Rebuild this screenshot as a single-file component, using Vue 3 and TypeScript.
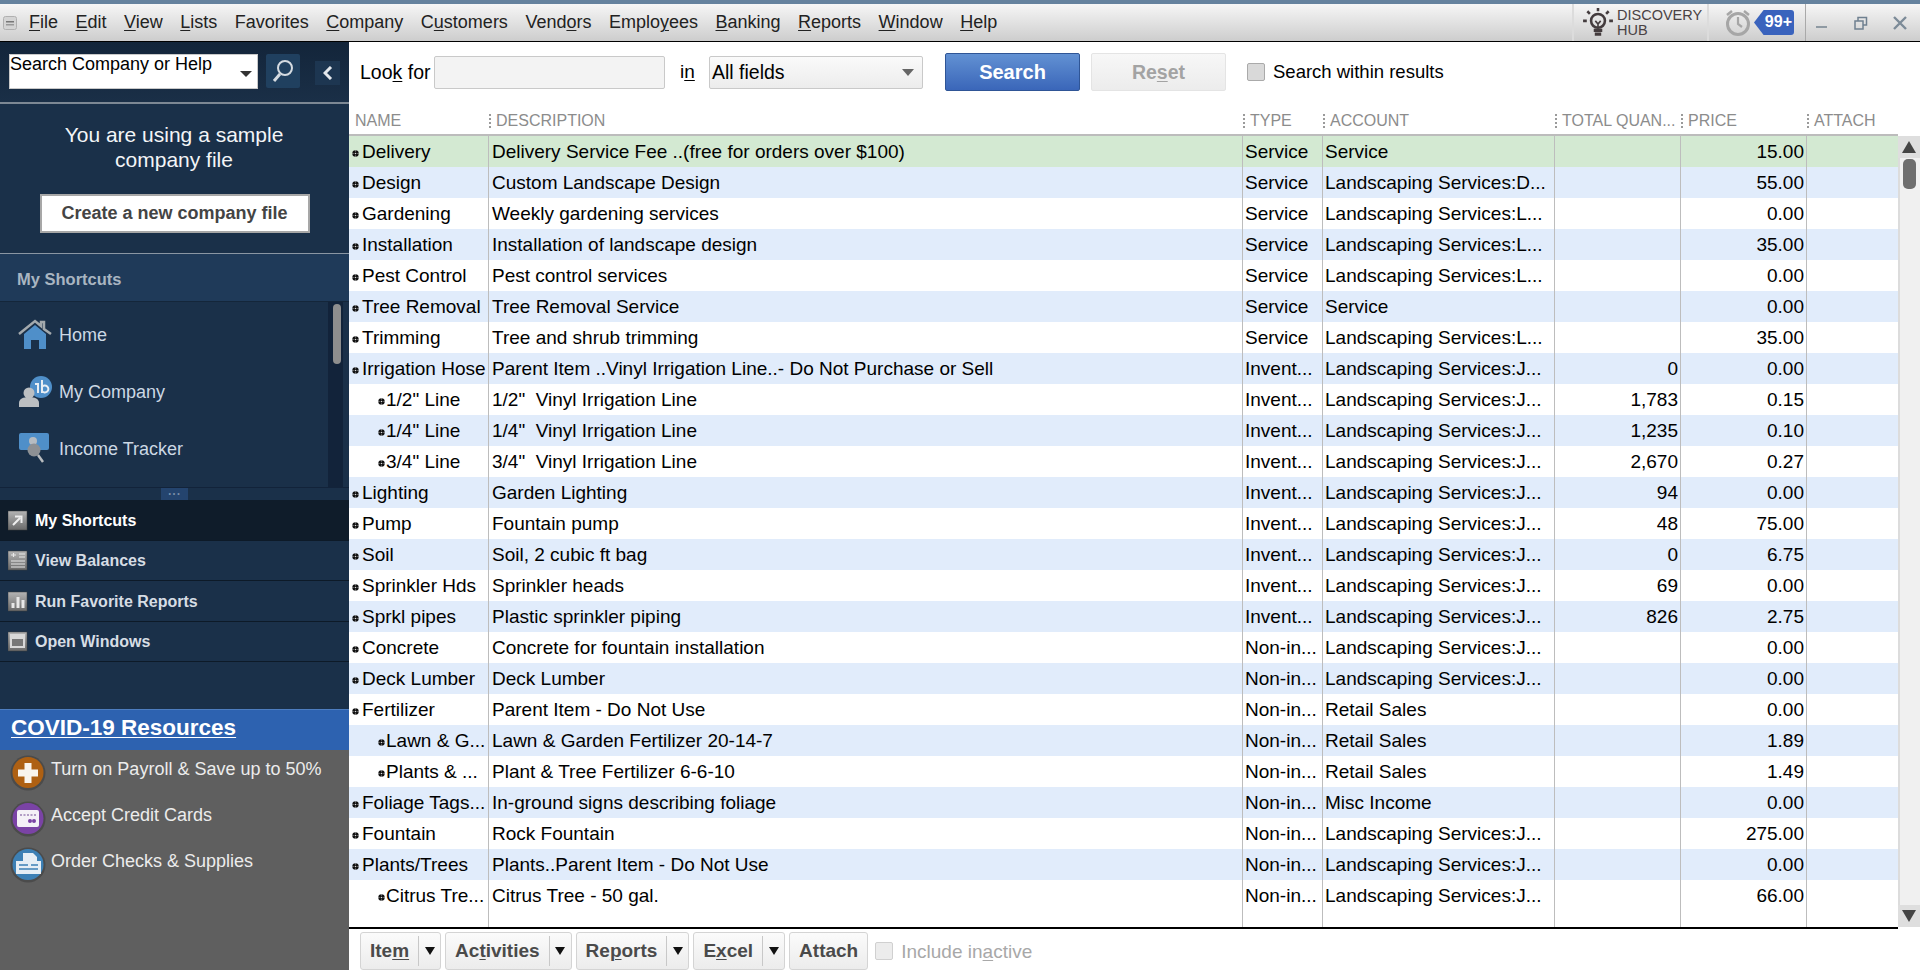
<script setup lang="ts">
interface MenuItem {
  pre: string;
  key: string;
  post: string;
}

interface Row {
  name: string;
  child?: boolean;
  desc: string;
  type: string;
  account: string;
  qty?: string;
  price: string;
}

const menus: MenuItem[] = [
  { pre: '', key: 'F', post: 'ile' },
  { pre: '', key: 'E', post: 'dit' },
  { pre: '', key: 'V', post: 'iew' },
  { pre: '', key: 'L', post: 'ists' },
  { pre: 'Favorites', key: '', post: '' },
  { pre: '', key: 'C', post: 'ompany' },
  { pre: 'C', key: 'u', post: 'stomers' },
  { pre: 'Vend', key: 'o', post: 'rs' },
  { pre: 'Emplo', key: 'y', post: 'ees' },
  { pre: '', key: 'B', post: 'anking' },
  { pre: '', key: 'R', post: 'eports' },
  { pre: '', key: 'W', post: 'indow' },
  { pre: '', key: 'H', post: 'elp' },
];

const headers = ['NAME', 'DESCRIPTION', 'TYPE', 'ACCOUNT', 'TOTAL QUAN...', 'PRICE', 'ATTACH'];

const LS = 'Landscaping Services:';

const rows: Row[] = [
  { name: 'Delivery', desc: 'Delivery Service Fee ..(free for orders over $100)', type: 'Service', account: 'Service', price: '15.00' },
  { name: 'Design', desc: 'Custom Landscape Design', type: 'Service', account: LS + 'D...', price: '55.00' },
  { name: 'Gardening', desc: 'Weekly gardening services', type: 'Service', account: LS + 'L...', price: '0.00' },
  { name: 'Installation', desc: 'Installation of landscape design', type: 'Service', account: LS + 'L...', price: '35.00' },
  { name: 'Pest Control', desc: 'Pest control services', type: 'Service', account: LS + 'L...', price: '0.00' },
  { name: 'Tree Removal', desc: 'Tree Removal Service', type: 'Service', account: 'Service', price: '0.00' },
  { name: 'Trimming', desc: 'Tree and shrub trimming', type: 'Service', account: LS + 'L...', price: '35.00' },
  { name: 'Irrigation Hose', desc: 'Parent Item ..Vinyl Irrigation Line..- Do Not Purchase or Sell', type: 'Invent...', account: LS + 'J...', qty: '0', price: '0.00' },
  { name: '1/2" Line', child: true, desc: '1/2"\u00a0 Vinyl Irrigation Line', type: 'Invent...', account: LS + 'J...', qty: '1,783', price: '0.15' },
  { name: '1/4" Line', child: true, desc: '1/4"\u00a0 Vinyl Irrigation Line', type: 'Invent...', account: LS + 'J...', qty: '1,235', price: '0.10' },
  { name: '3/4" Line', child: true, desc: '3/4"\u00a0 Vinyl Irrigation Line', type: 'Invent...', account: LS + 'J...', qty: '2,670', price: '0.27' },
  { name: 'Lighting', desc: 'Garden Lighting', type: 'Invent...', account: LS + 'J...', qty: '94', price: '0.00' },
  { name: 'Pump', desc: 'Fountain pump', type: 'Invent...', account: LS + 'J...', qty: '48', price: '75.00' },
  { name: 'Soil', desc: 'Soil, 2 cubic ft bag', type: 'Invent...', account: LS + 'J...', qty: '0', price: '6.75' },
  { name: 'Sprinkler Hds', desc: 'Sprinkler heads', type: 'Invent...', account: LS + 'J...', qty: '69', price: '0.00' },
  { name: 'Sprkl pipes', desc: 'Plastic sprinkler piping', type: 'Invent...', account: LS + 'J...', qty: '826', price: '2.75' },
  { name: 'Concrete', desc: 'Concrete for fountain installation', type: 'Non-in...', account: LS + 'J...', price: '0.00' },
  { name: 'Deck Lumber', desc: 'Deck Lumber', type: 'Non-in...', account: LS + 'J...', price: '0.00' },
  { name: 'Fertilizer', desc: 'Parent Item - Do Not Use', type: 'Non-in...', account: 'Retail Sales', price: '0.00' },
  { name: 'Lawn & G...', child: true, desc: 'Lawn & Garden Fertilizer 20-14-7', type: 'Non-in...', account: 'Retail Sales', price: '1.89' },
  { name: 'Plants & ...', child: true, desc: 'Plant & Tree Fertilizer 6-6-10', type: 'Non-in...', account: 'Retail Sales', price: '1.49' },
  { name: 'Foliage Tags...', desc: 'In-ground signs describing foliage', type: 'Non-in...', account: 'Misc Income', price: '0.00' },
  { name: 'Fountain', desc: 'Rock Fountain', type: 'Non-in...', account: LS + 'J...', price: '275.00' },
  { name: 'Plants/Trees', desc: 'Plants..Parent Item - Do Not Use', type: 'Non-in...', account: LS + 'J...', price: '0.00' },
  { name: 'Citrus Tre...', child: true, desc: 'Citrus Tree - 50 gal.', type: 'Non-in...', account: LS + 'J...', price: '66.00' },
];

const tabs = ['My Shortcuts', 'View Balances', 'Run Favorite Reports', 'Open Windows'];
</script>

<template>
  <div class="app">
    <div class="title-strip"></div>

    <div class="menubar">
      <svg class="sys-icon" width="14" height="14" viewBox="0 0 14 14">
        <rect x="0.5" y="0.5" width="13" height="13" rx="2" fill="#d4d4d4" stroke="#b0b0b0" />
        <rect x="3" y="5" width="8" height="1.5" fill="#777" />
        <rect x="3" y="8" width="8" height="1.5" fill="#999" />
      </svg>
      <nav class="menus">
        <span v-for="m in menus" :key="m.pre + m.key + m.post" class="menu">{{ m.pre }}<u>{{ m.key }}</u>{{ m.post }}</span>
      </nav>

      <div class="hub">
        <svg width="32" height="32" viewBox="0 0 30 30" fill="none" stroke="#443c3e" stroke-width="2.4">
          <circle cx="15" cy="13" r="6.5" />
          <path d="M12.5 13l2.5 3 2.5-3M15 16v3.5" stroke-width="1.5" />
          <path d="M11 22h8M12 25.5h6" stroke-width="3" />
          <path d="M15 1v3M5 4l2.4 2.4M25 4l-2.4 2.4M1 13h3.5M25.500 13H29" />
        </svg>
        <div class="hub-text">DISCOVERY<br />HUB</div>
      </div>

      <div class="alerts">
        <svg width="26" height="28" viewBox="0 0 26 28" fill="none" stroke="#a6a6a6">
          <circle cx="13" cy="15" r="10.500" stroke-width="3" />
          <path d="M13 8v7l4 3" stroke-width="2.200" />
          <path d="M2 6l5-4M24 6l-5-4" stroke-width="2.500" />
        </svg>
        <span class="badge">99+</span>
      </div>

      <div class="win-btns">
        <svg width="12" height="12" viewBox="0 0 12 12"><rect x="0" y="9" width="11" height="2" fill="#8f9aa3" /></svg>
        <svg width="14" height="14" viewBox="0 0 14 14" fill="none" stroke="#6f8090" stroke-width="1.500">
          <rect x="1" y="5" width="8" height="8" />
          <path d="M4 5V1.500h8.500V9H9" />
        </svg>
        <svg width="14" height="14" viewBox="0 0 14 14" fill="none" stroke="#7c8b98" stroke-width="2.400"><path d="M1 1l12 12M13 1L1 13" /></svg>
      </div>
    </div>

    <div class="main">
      <aside class="sidebar">
        <div class="search-strip">
          <div class="search-box">
            <span>Search Company or Help</span>
            <i class="caret"></i>
          </div>
          <button class="icon-btn">
            <svg width="22" height="24" viewBox="0 0 22 24" fill="none" stroke="#d5dbe1">
              <circle cx="13" cy="9" r="7" stroke-width="2" />
              <path d="M8 15l-6 7" stroke-width="3" />
            </svg>
          </button>
          <button class="collapse-btn">
            <svg width="10" height="14" viewBox="0 0 10 14" fill="none" stroke="#e4e8ec" stroke-width="3"><path d="M8 1L2 7l6 6" /></svg>
          </button>
        </div>

        <div class="sample">
          <p>You are using a sample<br />company file</p>
          <button class="create-btn">Create a new company file</button>
        </div>

        <div class="shortcuts-head">My Shortcuts</div>

        <div class="shortcuts">
          <div class="shortcut-list">
            <div class="shortcut">
              <svg width="34" height="32" viewBox="0 0 34 32">
                <path d="M1 15L17 2l6 5V3h3v7l7 5" fill="none" stroke="#a3a9ad" stroke-width="2.500" />
                <path d="M6 15L17 6l11 9v15h-7v-9h-8v9H6z" fill="#4f8fc9" />
              </svg>
              <span>Home</span>
            </div>
            <div class="shortcut">
              <svg width="34" height="32" viewBox="0 0 34 32">
                <circle cx="23" cy="11" r="11" fill="#4f8fc9" />
                <path d="M17 8h3v9M24 4v13M24 11a3.500 3.500 0 1 1 0 4" fill="none" stroke="#e8eef4" stroke-width="2" />
                <circle cx="11" cy="17" r="5.500" fill="#bcbfc2" />
                <path d="M1 31v-4c0-4 4-6 10-6s10 2 10 6v4z" fill="#bcbfc2" />
              </svg>
              <span>My Company</span>
            </div>
            <div class="shortcut">
              <svg width="34" height="34" viewBox="0 0 34 34">
                <path d="M3 1h26a2 2 0 0 1 2 2v13a2 2 0 0 1-2 2H3a2 2 0 0 1-2-2V3a2 2 0 0 1 2-2z" fill="#4f8fc9" />
                <circle cx="15" cy="9" r="4" fill="#b6bcc2" />
                <circle cx="16" cy="18" r="6.500" fill="#8d9094" />
                <path d="M20 23l5 7" stroke="#b9bcbf" stroke-width="2.500" />
              </svg>
              <span>Income Tracker</span>
            </div>
          </div>
          <div class="side-scroll"><div class="side-thumb"></div></div>
        </div>

        <div class="grip"><span>• • •</span></div>

        <div v-for="(t, i) in tabs" :key="t" class="tab" :class="{ 'tab-active': i === 0 }">
          <svg width="20" height="22" viewBox="0 0 20 22">
            <defs>
              <linearGradient :id="'tabg' + i" x1="0" y1="0" x2="0" y2="1">
                <stop offset="0" stop-color="#b4b4b4" />
                <stop offset="1" stop-color="#6a6a6a" />
              </linearGradient>
            </defs>
            <rect x="0" y="1" width="19" height="19" :fill="`url(#tabg${i})`" stroke="#3f3f3f" stroke-width="0.500" />
            <path v-if="i === 0" d="M5 15l7-7M7 6.500h6.500V13" fill="none" stroke="#eee" stroke-width="2" />
            <path v-if="i === 1" d="M3 5h5M5.500 3v4M11 4h6M11 7h6M3 11h14M3 14h14M3 17h14" fill="none" stroke="#e8e8e8" stroke-width="1.200" />
            <path v-if="i === 2" d="M5 17v-5M10 17V6M15 17V9" fill="none" stroke="#e8e8e8" stroke-width="3" />
            <g v-if="i === 3">
              <rect x="2" y="3" width="15" height="14" fill="#d8d8d8" />
              <rect x="4" y="8" width="11" height="7" fill="#777" />
            </g>
          </svg>
          <span>{{ t }}</span>
        </div>

        <div class="side-gap"></div>

        <div class="covid"><u>COVID-19 Resources</u></div>

        <div class="promos">
          <div class="promo">
            <svg width="36" height="36" viewBox="0 0 36 36">
              <circle cx="18" cy="18" r="17.500" fill="#4b4b4b" />
              <circle cx="18" cy="17.500" r="15.500" fill="#ae6013" />
              <path d="M14.500 8h7v6.500H28v7h-6.500V28h-7v-6.500H8v-7h6.500z" fill="#f8f4ee" />
            </svg>
            <span>Turn on Payroll &amp; Save up to 50%</span>
          </div>
          <div class="promo">
            <svg width="36" height="36" viewBox="0 0 36 36">
              <circle cx="18" cy="18" r="17.500" fill="#4b4b4b" />
              <circle cx="18" cy="17.500" r="15.500" fill="#7a43a5" />
              <rect x="7" y="9" width="22" height="17" rx="2" fill="#f4f1f7" />
              <path d="M10 14h16" stroke="#9a80b5" stroke-width="1.500" stroke-dasharray="2 1.500" />
              <circle cx="20" cy="20" r="2" fill="#7a43a5" />
              <circle cx="24" cy="20" r="2" fill="#7a43a5" />
            </svg>
            <span>Accept Credit Cards</span>
          </div>
          <div class="promo">
            <svg width="36" height="36" viewBox="0 0 36 36">
              <circle cx="18" cy="18" r="17.500" fill="#4b4b4b" />
              <circle cx="18" cy="17.500" r="15.500" fill="#3d80b5" />
              <path d="M13 6h10l4 4v4H13z" fill="#e6eef5" />
              <rect x="6" y="14" width="25" height="13" fill="#e6eef5" />
              <path d="M9 18h9M21 18h7M9 22h19" stroke="#3d80b5" stroke-width="1.500" />
            </svg>
            <span>Order Checks &amp; Supplies</span>
          </div>
        </div>
      </aside>

      <section class="content">
        <div class="filter">
          <label class="look">Loo<u>k</u> for</label>
          <div class="look-input"></div>
          <label class="in">i<u>n</u></label>
          <div class="select">
            <span>All fields</span>
            <i class="select-caret"></i>
          </div>
          <button class="btn-search">Search</button>
          <button class="btn-reset">Re<u>s</u>et</button>
          <span class="check"></span>
          <span class="within">Search within results</span>
        </div>

        <div class="table">
          <div class="table-main">
            <div class="cols head">
              <div v-for="(h, i) in headers" :key="h" class="hcell" :class="{ 'hcell-first': i === 0 }">{{ h }}</div>
            </div>
            <div class="body">
              <div
                v-for="(r, i) in rows"
                :key="r.name"
                class="cols row"
                :class="{ selected: i === 0, alt: i > 0 && i % 2 === 1 }"
              >
                <div class="cell name" :class="{ child: r.child }">
                  <svg class="bullet" width="7" height="7" viewBox="0 0 7 7">
                    <circle cx="3.5" cy="3.5" r="3.2" fill="#111" />
                    <path d="M3.500 0v2M3.500 5v2M0 3.500h2M5 3.500h2" stroke="#fff" stroke-width="0.600" opacity="0.500" />
                    <circle cx="3.5" cy="3.5" r="0.800" fill="#ddd" />
                  </svg>
                  {{ r.name }}
                </div>
                <div class="cell">{{ r.desc }}</div>
                <div class="cell type">{{ r.type }}</div>
                <div class="cell account">{{ r.account }}</div>
                <div class="cell num">{{ r.qty }}</div>
                <div class="cell num">{{ r.price }}</div>
                <div class="cell last"></div>
              </div>
              <div class="cols filler">
                <div v-for="n in 6" :key="n" class="cell"></div>
                <div class="cell last"></div>
              </div>
            </div>
          </div>
          <div class="vscroll">
            <div class="vs-head"></div>
            <div class="vs-btn"><i class="arrow-up"></i></div>
            <div class="vs-track"><div class="vs-thumb"></div></div>
            <div class="vs-btn"><i class="arrow-down"></i></div>
          </div>
        </div>

        <div class="actions">
          <button class="split"><span class="split-label">Ite<u>m</u></span><span class="split-arrow"><i></i></span></button>
          <button class="split"><span class="split-label">Ac<u>t</u>ivities</span><span class="split-arrow"><i></i></span></button>
          <button class="split"><span class="split-label">Re<u>p</u>orts</span><span class="split-arrow"><i></i></span></button>
          <button class="split"><span class="split-label">E<u>x</u>cel</span><span class="split-arrow"><i></i></span></button>
          <button class="split"><span class="split-label">Attach</span></button>
          <span class="check check-off"></span>
          <span class="inactive">Include in<u>a</u>ctive</span>
        </div>
      </section>
    </div>
  </div>
</template>

<style scoped>
.app {
  width: 1920px;
  height: 970px;
  display: flex;
  flex-direction: column;
  overflow: hidden;
  font-family: "Liberation Sans", Arial, sans-serif;
  font-size: 19px;
  color: #000;
  background: #fff;
}

u {
  text-decoration-thickness: 1px;
  text-underline-offset: 2px;
}

button {
  font-family: inherit;
  padding: 0;
}

.title-strip {
  height: 4px;
  background: #65829e;
  flex-shrink: 0;
}

/* menu bar */
.menubar {
  height: 38px;
  flex-shrink: 0;
  display: flex;
  align-items: center;
  background: linear-gradient(#f6f6f6, #cdcdcd);
  border-bottom: 1px solid #000;
  box-sizing: border-box;
}

.sys-icon {
  margin-left: 3px;
  flex-shrink: 0;
}

.menus {
  display: flex;
  margin-left: 12px;
  gap: 17.5px;
  font-size: 18px;
  color: #222;
}

.menu {
  white-space: nowrap;
}

.hub {
  margin-left: auto;
  width: 137px;
  height: 100%;
  display: flex;
  align-items: center;
  gap: 3px;
  padding-left: 8px;
  box-sizing: border-box;
  border-left: 2px solid #dcdcdc;
  border-right: 2px solid #dcdcdc;
}

.hub-text {
  font-size: 14.500px;
  line-height: 15px;
  color: #4a4244;
}

.alerts {
  width: 97px;
  height: 100%;
  display: flex;
  align-items: center;
  gap: 3px;
  padding-left: 16px;
  box-sizing: border-box;
  border-right: 1px solid #a9a9a9;
}

.badge {
  width: 40px;
  height: 25px;
  background: #3a63bd;
  color: #fff;
  font-weight: 700;
  font-size: 16px;
  line-height: 23px;
  text-align: right;
  padding-right: 2px;
  box-sizing: border-box;
  border-radius: 0 3px 3px 0;
  clip-path: polygon(24% 0, 100% 0, 100% 100%, 24% 100%, 0 50%);
}

.win-btns {
  width: 114px;
  display: flex;
  align-items: center;
  justify-content: space-between;
  padding: 0 13px 0 10px;
  box-sizing: border-box;
}

.main {
  flex: 1;
  display: flex;
  min-height: 0;
}

/* left panel */
.sidebar {
  width: 349px;
  flex-shrink: 0;
  display: flex;
  flex-direction: column;
  background: #1a3049;
  color: #fff;
}

.search-strip {
  height: 62px;
  flex-shrink: 0;
  display: flex;
  align-items: flex-start;
  padding: 12px 0 0 9px;
  box-sizing: border-box;
  background: linear-gradient(#13253a, #1a2f47);
  border-bottom: 2px solid #7d8894;
}

.search-box {
  width: 249px;
  height: 35px;
  background: #fff;
  border: 1px solid #c9c9c9;
  box-sizing: border-box;
  color: #000;
  font-size: 18px;
  line-height: 18px;
  display: flex;
  align-items: flex-start;
}

.caret {
  margin: 16px 5px 0 auto;
  width: 0;
  height: 0;
  border-left: 6px solid transparent;
  border-right: 6px solid transparent;
  border-top: 6px solid #333;
}

.icon-btn {
  width: 34px;
  height: 34px;
  margin-left: 8px;
  background: #20405f;
  border: 0;
  border-radius: 2px;
  display: flex;
  align-items: center;
  justify-content: center;
}

.collapse-btn {
  width: 25px;
  height: 24px;
  margin: 7px 0 0 15px;
  background: #1d3651;
  border: 0;
  display: flex;
  align-items: center;
  justify-content: center;
}

.sample {
  height: 150px;
  flex-shrink: 0;
  display: flex;
  flex-direction: column;
  align-items: center;
  border-bottom: 1px solid #8a96a3;
  box-sizing: border-box;
}

.sample p {
  margin: 18px 0 0 -1px;
  font-size: 21px;
  line-height: 25px;
  text-align: center;
  color: #f3f5f7;
}

.create-btn {
  width: 270px;
  height: 39px;
  margin-top: 22px;
  background: #fff;
  border: 2px solid #a7a7a7;
  box-sizing: border-box;
  font-weight: 700;
  font-size: 18px;
  color: #444;
}

.shortcuts-head {
  height: 48px;
  flex-shrink: 0;
  display: flex;
  align-items: center;
  padding: 3px 0 0 17px;
  background: #1f3a59;
  border-bottom: 1px solid #14263a;
  box-sizing: border-box;
  font-weight: 700;
  font-size: 16.5px;
  color: #a9b5c1;
}

.shortcuts {
  height: 185px;
  flex-shrink: 0;
  display: flex;
}

.shortcut-list {
  flex: 1;
  display: flex;
  flex-direction: column;
  padding-top: 9px;
  gap: 9px;
}

.shortcut {
  height: 48px;
  display: flex;
  align-items: center;
  gap: 7px;
  padding-left: 18px;
  color: #ccd8e4;
  font-size: 18px;
}

.shortcut svg {
  flex-shrink: 0;
}

.side-scroll {
  width: 15px;
  margin-right: 6px;
  background: #12233a;
  padding: 2px 0 0 5px;
  box-sizing: border-box;
}

.side-thumb {
  width: 8px;
  height: 60px;
  border-radius: 4px;
  background: #8e8e8e;
}

.grip {
  height: 13px;
  flex-shrink: 0;
  display: flex;
  justify-content: center;
  border-top: 1px solid #12233a;
  box-sizing: border-box;
}

.grip span {
  width: 27px;
  height: 12px;
  background: #24446e;
  color: #7d92ab;
  font-size: 7px;
  line-height: 12px;
  text-align: center;
  margin-left: -1px;
}

.tab {
  height: 40.500px;
  flex-shrink: 0;
  display: flex;
  align-items: center;
  gap: 7px;
  padding: 2px 0 0 8px;
  border-bottom: 1px solid #0d1a28;
  box-sizing: border-box;
  font-weight: 700;
  font-size: 16px;
  color: #d6dde4;
}

.tab-active {
  background: #0f1c2a;
  color: #fff;
}

.side-gap {
  height: 47px;
  flex-shrink: 0;
}

.covid {
  height: 41px;
  flex-shrink: 0;
  display: flex;
  align-items: center;
  padding: 0 0 4px 11px;
  background: #2d62b0;
  border-top: 1px solid #4d7dc0;
  box-sizing: border-box;
  font-weight: 700;
  font-size: 22.5px;
  color: #fff;
}

.promos {
  flex: 1;
  background: #5f5f5f;
  padding: 5px 0 0 10px;
  display: flex;
  flex-direction: column;
  gap: 10px;
}

.promo {
  height: 36px;
  display: flex;
  align-items: flex-start;
  gap: 5px;
  font-size: 18px;
  color: #ececec;
}

.promo span {
  line-height: 29px;
}

.promo svg {
  flex-shrink: 0;
}

/* right side */
.content {
  flex: 1;
  min-width: 0;
  display: flex;
  flex-direction: column;
}

.filter {
  height: 52px;
  flex-shrink: 0;
  display: flex;
  align-items: center;
  padding: 8px 0 0 11px;
  box-sizing: border-box;
}

.look {
  width: 74px;
  white-space: nowrap;
  font-size: 19.5px;
}

.look-input {
  width: 231px;
  height: 33px;
  background: #f3f3f3;
  border: 1px solid #c9c9c9;
  border-radius: 2px;
  box-sizing: border-box;
}

.in {
  margin-left: 15px;
  width: 29px;
}

.select {
  width: 214px;
  height: 33px;
  display: flex;
  align-items: center;
  padding: 0 8px 0 2px;
  box-sizing: border-box;
  font-size: 19.5px;
  background: linear-gradient(#fafafa, #ececec);
  border: 1px solid #c9c9c9;
  border-radius: 2px;
}

.select-caret {
  margin-left: auto;
  width: 0;
  height: 0;
  border-left: 6px solid transparent;
  border-right: 6px solid transparent;
  border-top: 7px solid #666;
}

.btn-search {
  width: 135px;
  height: 38px;
  margin-left: 22px;
  background: linear-gradient(#6291d3, #3a66b9);
  border: 1px solid #2f5596;
  border-radius: 2px;
  color: #fff;
  font-weight: 700;
  font-size: 20px;
}

.btn-reset {
  width: 135px;
  height: 38px;
  margin-left: 11px;
  background: linear-gradient(#f7f7f7, #ececec);
  border: 1px solid #e4e4e4;
  border-radius: 2px;
  color: #a3a3a3;
  font-weight: 700;
  font-size: 19.5px;
}

.check {
  width: 18px;
  height: 18px;
  margin-left: 21px;
  background: #d9d9d9;
  border: 1px solid #aaa;
  border-radius: 2px;
  box-sizing: border-box;
}

.within {
  margin-left: 8px;
  font-size: 18.500px;
}

.table {
  flex: 1;
  min-height: 0;
  display: flex;
}

.table-main {
  width: 1549px;
  display: flex;
  flex-direction: column;
  border-bottom: 2px solid #000;
}

.cols {
  display: grid;
  grid-template-columns: 140px 754px 80px 232px 126px 126px 91px;
}

.head {
  height: 42px;
  flex-shrink: 0;
  padding-top: 20px;
  border-bottom: 2px solid #bcbcbc;
  box-sizing: border-box;
}

.hcell {
  height: 14px;
  padding-left: 5px;
  border-left: 2px dotted #9a9a9a;
  box-sizing: border-box;
  font-size: 16px;
  line-height: 14px;
  color: #8c8c8c;
  white-space: nowrap;
}

.hcell-first {
  border-left: 0;
  padding-left: 6px;
}

.body {
  flex: 1;
  min-height: 0;
  display: flex;
  flex-direction: column;
}

.row {
  height: 31px;
  flex-shrink: 0;
}

.row.selected {
  background: #d3e9d2;
}

.row.alt {
  background: #e1ecfb;
}

.filler {
  flex: 1;
}

.cell {
  border-right: 1px solid #bdbdbd;
  box-sizing: border-box;
  padding-left: 3px;
  line-height: 31px;
  white-space: nowrap;
  overflow: hidden;
}

.cell.last {
  border-right: 0;
}

.name {
  display: flex;
  align-items: center;
  padding-left: 3px;
}

.name.child {
  padding-left: 29px;
}

.name.child .bullet {
  margin-right: 1px;
}

.bullet {
  margin: 3px 3px 0 0;
  flex-shrink: 0;
}

.type {
  padding-left: 2px;
}

.account {
  padding-left: 2px;
}

.num {
  text-align: right;
  padding-right: 2px;
}

.vscroll {
  flex: 1;
  display: flex;
  flex-direction: column;
  margin-bottom: 2px;
}

.vs-head {
  height: 42px;
  flex-shrink: 0;
}

.vs-btn {
  height: 22px;
  flex-shrink: 0;
  background: #dedede;
  display: flex;
  align-items: center;
  justify-content: center;
}

.arrow-up,
.arrow-down {
  width: 0;
  height: 0;
  border-left: 7px solid transparent;
  border-right: 7px solid transparent;
}

.arrow-up {
  border-bottom: 12px solid #444;
}

.arrow-down {
  border-top: 12px solid #444;
}

.vs-track {
  flex: 1;
  background: #f0f0f0;
  border-left: 2px solid #dcdcdc;
  padding: 1px 4px 0 3px;
}

.vs-thumb {
  height: 30px;
  background: #6e6e6e;
  border-radius: 5px;
}

.actions {
  height: 41px;
  flex-shrink: 0;
  display: flex;
  align-items: flex-start;
  padding: 3px 0 0 11px;
  box-sizing: border-box;
  gap: 4px;
}

.split {
  height: 38px;
  display: flex;
  align-items: center;
  background: linear-gradient(#fbfbfb, #ececec);
  border: 1px solid #d4d4d4;
  border-radius: 3px;
  box-sizing: border-box;
  font-weight: 700;
  font-size: 19px;
  color: #4a4a4a;
}

.split-label {
  padding: 0 9px;
  white-space: nowrap;
}

.split-arrow {
  width: 21px;
  height: 30px;
  display: flex;
  align-items: center;
  justify-content: center;
  border-left: 1px solid #c8c8c8;
}

.split-arrow i {
  width: 0;
  height: 0;
  border-left: 5px solid transparent;
  border-right: 5px solid transparent;
  border-top: 8px solid #111;
}

.check-off {
  margin: 10px 0 0 3px;
  background: #ececec;
  border-color: #d0d0d0;
}

.inactive {
  margin: 9px 0 0 4px;
  color: #a8a8a8;
  font-size: 19px;
}
</style>
